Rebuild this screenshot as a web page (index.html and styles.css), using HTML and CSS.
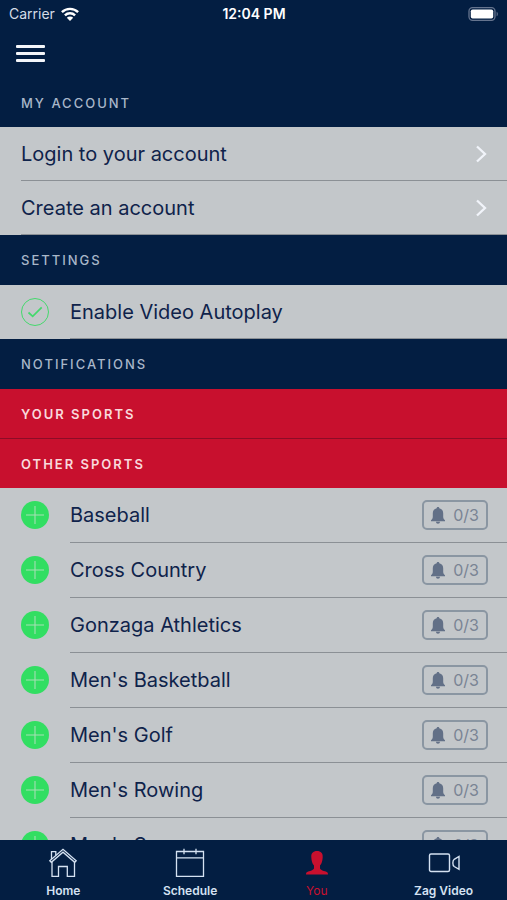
FILE: index.html
```html
<!DOCTYPE html>
<html lang="en">
<head>
    <meta charset="UTF-8">
    <meta name="viewport" content="width=device-width, initial-scale=1.0">
    <title>You</title>
    <link rel="stylesheet" href="styles.css">
</head>
<body>
    <!-- Shared icons -->
    <svg class="sprite" aria-hidden="true">
        <symbol id="chevron" viewBox="0 0 12 18">
            <path d="M1 1.500 9 9 1 16.500" fill="none" stroke="currentColor" stroke-width="2.300"/>
        </symbol>
        <symbol id="plus" viewBox="0 0 28 28">
            <circle cx="14" cy="14" r="14" fill="#32de62"/>
            <path d="M14 5v18M5 14h18" fill="none" stroke="#a5dfb3" stroke-width="1.100"/>
        </symbol>
        <symbol id="bell" viewBox="0 0 14 17">
            <path d="M7 0c.8 0 1.300.5 1.300 1.300C10.900 1.900 12.200 3.800 12.200 6.200v3.600c0 1.700.6 2.500 1.800 3.400v1.100H0v-1.100c1.200-.9 1.800-1.700 1.800-3.400V6.200c0-2.400 1.300-4.300 3.900-4.900C5.700.5 6.200 0 7 0zM5 14.800h4c0 1.200-.8 2-2 2s-2-.8-2-2z" fill="currentColor"/>
        </symbol>
    </svg>

    <header class="top">
        <div class="status">
            <span class="carrier">Carrier
                <svg width="18" height="14" viewBox="0 0 18 14" aria-hidden="true">
                    <g fill="none" stroke="#fff" stroke-width="2.400">
                        <path d="M.9 5.200a11.500 11.500 0 0 1 16.200 0"/>
                        <path d="M3.900 8.300a7.300 7.300 0 0 1 10.200 0"/>
                    </g>
                    <path d="M9 14 5.800 10.800a4.600 4.600 0 0 1 6.400 0z" fill="#fff"/>
                </svg>
            </span>
            <span class="time">12:04 PM</span>
            <svg class="battery" width="31" height="14" viewBox="0 0 31 14" aria-hidden="true">
                <rect x="1" y=".7" width="26" height="12.600" rx="3.500" fill="none" stroke="#65748e" stroke-width="1.300"/>
                <rect x="2.800" y="2.500" width="22.400" height="9" rx="1.800" fill="#fff"/>
                <path d="M28.600 4.700c1.600.6 1.600 4 0 4.600z" fill="#65748e"/>
            </svg>
        </div>
        <button class="menu" type="button" aria-label="Menu">
            <span></span><span></span><span></span>
        </button>
    </header>

    <main class="content">
        <h2 class="heading first">MY ACCOUNT</h2>
        <ul class="list">
            <li class="row"><a class="row-body" href="#login">Login to your account <svg class="chevron" aria-hidden="true"><use href="#chevron"/></svg></a></li>
            <li class="row"><a class="row-body" href="#create">Create an account <svg class="chevron" aria-hidden="true"><use href="#chevron"/></svg></a></li>
        </ul>

        <h2 class="heading">SETTINGS</h2>
        <div class="row">
            <span class="check">
                <input type="checkbox" id="autoplay" checked>
                <svg viewBox="0 0 28 28" aria-hidden="true">
                    <path d="M7.500 14.500 11.700 18.300 20.700 9.300" fill="none" stroke="#43d96c" stroke-width="1.700"/>
                </svg>
            </span>
            <label class="row-body" for="autoplay">Enable Video Autoplay</label>
        </div>

        <h2 class="heading">NOTIFICATIONS</h2>
        <h3 class="heading red">YOUR SPORTS</h3>
        <h3 class="heading red">OTHER SPORTS</h3>
        <ul class="list sports">
            <li class="row">
                <button class="add" type="button" aria-label="Add Baseball"><svg><use href="#plus"/></svg></button>
                <div class="row-body">Baseball <button class="alerts" type="button"><svg><use href="#bell"/></svg>0/3</button></div>
            </li>
            <li class="row">
                <button class="add" type="button" aria-label="Add Cross Country"><svg><use href="#plus"/></svg></button>
                <div class="row-body">Cross Country <button class="alerts" type="button"><svg><use href="#bell"/></svg>0/3</button></div>
            </li>
            <li class="row">
                <button class="add" type="button" aria-label="Add Gonzaga Athletics"><svg><use href="#plus"/></svg></button>
                <div class="row-body">Gonzaga Athletics <button class="alerts" type="button"><svg><use href="#bell"/></svg>0/3</button></div>
            </li>
            <li class="row">
                <button class="add" type="button" aria-label="Add Men's Basketball"><svg><use href="#plus"/></svg></button>
                <div class="row-body">Men's Basketball <button class="alerts" type="button"><svg><use href="#bell"/></svg>0/3</button></div>
            </li>
            <li class="row">
                <button class="add" type="button" aria-label="Add Men's Golf"><svg><use href="#plus"/></svg></button>
                <div class="row-body">Men's Golf <button class="alerts" type="button"><svg><use href="#bell"/></svg>0/3</button></div>
            </li>
            <li class="row">
                <button class="add" type="button" aria-label="Add Men's Rowing"><svg><use href="#plus"/></svg></button>
                <div class="row-body">Men's Rowing <button class="alerts" type="button"><svg><use href="#bell"/></svg>0/3</button></div>
            </li>
            <li class="row">
                <button class="add" type="button" aria-label="Add Men's Soccer"><svg><use href="#plus"/></svg></button>
                <div class="row-body">Men's Soccer <button class="alerts" type="button"><svg><use href="#bell"/></svg>0/3</button></div>
            </li>
        </ul>
    </main>

    <nav class="tabs">
        <a href="#home">
            <svg width="32" height="32" viewBox="0 0 32 32" aria-hidden="true">
                <g fill="none" stroke="currentColor" stroke-width="1.300">
                    <path d="M2.800 13.800 16 2.300l13.200 11.500-1.500 1.500L16 5.200 4.300 15.300z"/>
                    <path d="M4.500 12V4.700h4.300v3.600M5 15v14.300h6.500V19.500h8.800v9.800H27.500V15"/>
                </g>
            </svg>
            Home
        </a>
        <a href="#schedule">
            <svg width="32" height="32" viewBox="0 0 32 32" aria-hidden="true">
                <g fill="none" stroke="currentColor" stroke-width="1.300">
                    <path d="M2.500 4.500h27v24.800h-27zM2.500 10.800h27M10 1.800v5.400M22 1.800v5.400"/>
                </g>
            </svg>
            Schedule
        </a>
        <a class="active" href="#you">
            <svg width="32" height="32" viewBox="0 0 32 32" aria-hidden="true">
                <path d="M16 4c4 0 6 2.300 5.700 6.200-.2 3.700-.9 6.300-2.700 8.300v2.700c0 1.600 3.500 2.600 5.800 3.400 1.600.5 2.200 1.300 2.200 2.900H5c0-1.600.6-2.400 2.200-2.900 2.300-.8 5.800-1.800 5.800-3.400v-2.700c-1.800-2-2.500-4.600-2.700-8.300C10 6.300 12 4 16 4z" fill="currentColor"/>
            </svg>
            You
        </a>
        <a href="#video">
            <svg width="32" height="32" viewBox="0 0 32 32" aria-hidden="true">
                <g fill="none" stroke="currentColor" stroke-width="1.400">
                    <rect x="1.500" y="7" width="20" height="17.500" rx="1.500"/>
                    <path d="M31 9.500v12.800l-4.800-2.800c-1.800-1.300-1.800-5.800 0-7.200z"/>
                </g>
            </svg>
            Zag Video
        </a>
    </nav>
</body>
</html>
```
FILE: styles.css
```css
* {
    box-sizing: border-box;
}

body {
    font-family: Inter, "Liberation Sans", sans-serif;
    background-color: #c3c7ca;
    color: #0f234b;
    margin: 0;
    height: 100vh;
    display: flex;
    flex-direction: column;
}

button {
    font: inherit;
    color: inherit;
    background: none;
    border: none;
    padding: 0;
    cursor: pointer;
}

a {
    color: inherit;
    text-decoration: none;
}

.sprite {
    display: none;
}

/* Top bar */
.top {
    background-color: #031e42;
    color: #fff;
}

.status {
    display: grid;
    grid-template-columns: 1fr auto 1fr;
    align-items: center;
    height: 27px;
    padding: 0 8px 0 9px;
    font-size: 14px;
}

.carrier {
    display: flex;
    align-items: center;
    gap: 6px;
    color: #d5dce6;
}

.time {
    font-weight: 600;
}

.battery {
    justify-self: end;
}

.menu {
    display: flex;
    flex-direction: column;
    justify-content: center;
    gap: 4px;
    width: 45px;
    height: 52px;
    padding-left: 16px;
}

.menu span {
    height: 3px;
    border-radius: 1px;
    background-color: #f4f6fa;
}

/* Scrolling list */
.content {
    flex: 1;
    min-height: 0;
    overflow-y: auto;
    scrollbar-width: none;
}

.heading {
    display: flex;
    align-items: center;
    height: 50px;
    margin: 0;
    padding-left: 21px;
    background-color: #031e42;
    color: #a9b7c9;
    font-size: 13px;
    font-weight: 500;
    letter-spacing: 2px;
}

.heading.first {
    height: 48px;
}

.heading.red {
    height: 49px;
    background-color: #c8102e;
    color: #f9d9dc;
    font-weight: 600;
}

.red + .red {
    height: 50px;
    border-top: 1px solid #8d0c27;
}

.list {
    list-style-type: none;
    margin: 0;
    padding: 0;
}

.row {
    display: flex;
    align-items: center;
    gap: 21px;
    height: 54px;
    padding-left: 21px;
    font-size: 20px;
}

.sports .row {
    height: 55px;
}

.row-body {
    flex: 1;
    display: flex;
    align-items: center;
    justify-content: space-between;
    height: 100%;
    padding-right: 19px;
    border-bottom: 1px solid #8b9095;
}

.chevron {
    width: 12px;
    height: 18px;
    color: #f1f4fa;
}

.check {
    display: grid;
    width: 28px;
    height: 28px;
}

.check input,
.check svg {
    grid-area: 1 / 1;
    width: 28px;
    height: 28px;
    margin: 0;
}

.check input {
    appearance: none;
    border: 1px solid #43d96c;
    border-radius: 50%;
}

.check svg {
    pointer-events: none;
}

.check input:not(:checked) + svg {
    visibility: hidden;
}

.add,
.add svg {
    display: block;
    width: 28px;
    height: 28px;
}

.add {
    margin-bottom: 1px;
}

.alerts {
    display: flex;
    align-items: center;
    justify-content: center;
    gap: 8px;
    width: 66px;
    height: 30px;
    border: 2px solid #8a96a2;
    border-radius: 5px;
    color: #7a8494;
    font-size: 16px;
}

.alerts svg {
    width: 14px;
    height: 17px;
    color: #627087;
}

/* Bottom tabs */
.tabs {
    display: flex;
    height: 60px;
    padding-top: 7px;
    background-color: #031e42;
    color: #d5e2f2;
    font-size: 12px;
    font-weight: 600;
}

.tabs a {
    flex: 1;
    display: flex;
    flex-direction: column;
    align-items: center;
    gap: 4px;
}

.tabs .active {
    color: #c8102e;
    font-weight: 400;
}
```
